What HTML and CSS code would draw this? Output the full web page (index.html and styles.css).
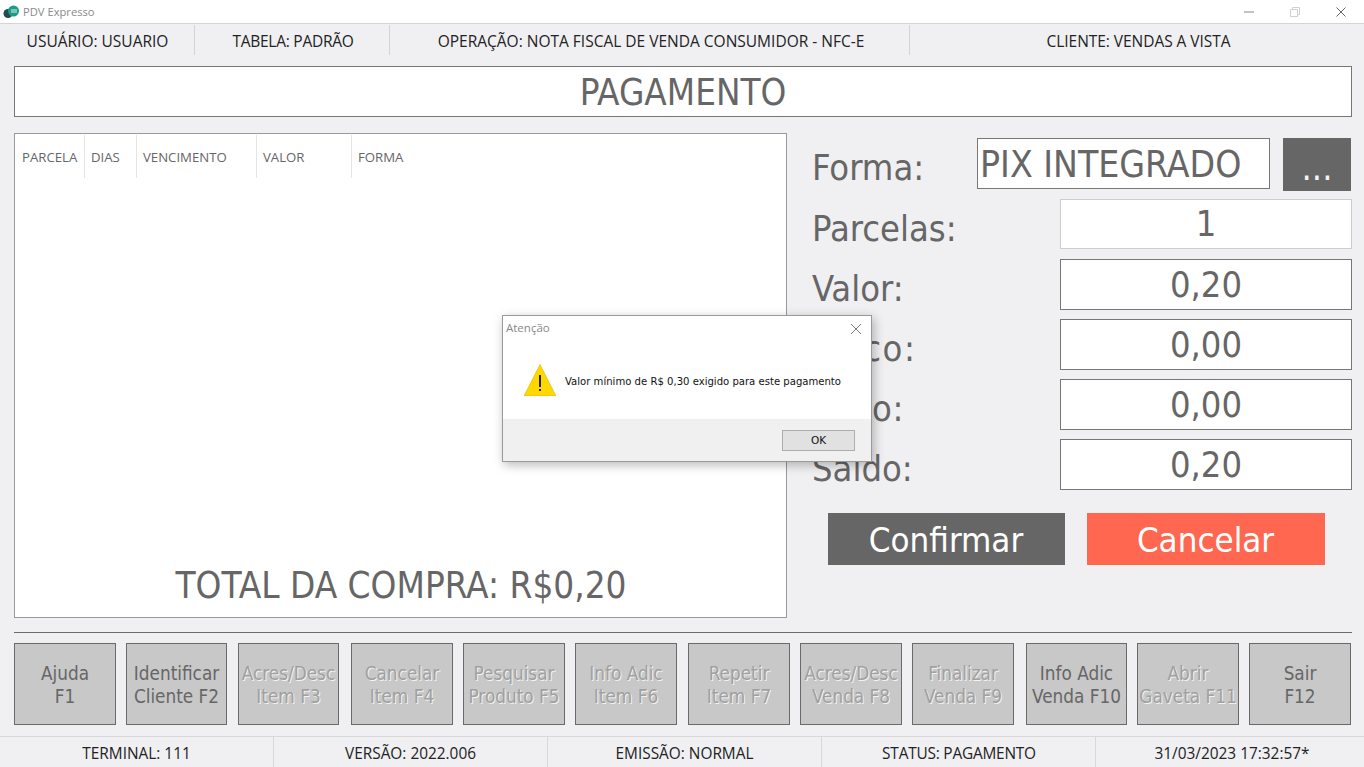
FILE: index.html
```html
<!DOCTYPE html>
<html lang="pt-BR">
<head>
<meta charset="utf-8">
<title>PDV Expresso</title>
<link rel="stylesheet" href="styles.css">
</head>
<body>
<div class="app">
  <header class="titlebar">
    <svg class="app-icon" viewBox="0 0 16 14" width="16" height="14">
      <circle cx="5" cy="8.5" r="4.5" fill="#1f4b52"/>
      <circle cx="10.5" cy="6" r="5.5" fill="#1e9a86"/>
      <rect x="8" y="4.5" width="6" height="1" fill="#d5f0ea"/>
      <rect x="8" y="6.5" width="6" height="1" fill="#d5f0ea"/>
    </svg>
    <span class="app-name">PDV Expresso</span>
    <div class="win-controls">
      <svg viewBox="0 0 12 12" width="12" height="12"><path d="M1 6h10" stroke="#888" fill="none"/></svg>
      <svg viewBox="0 0 12 12" width="12" height="12"><path d="M1.5 3.5h7v7h-7zM3.5 3.5v-2h7v7h-2" stroke="#d0d0d0" fill="none"/></svg>
      <svg viewBox="0 0 12 12" width="12" height="12"><path d="M1.5 1.5l9 9M10.5 1.5l-9 9" stroke="#666" fill="none"/></svg>
    </div>
  </header>

  <section class="infobar">
    <div class="info info-user">USUÁRIO: USUARIO</div>
    <div class="info info-table">TABELA: PADRÃO</div>
    <div class="info info-op">OPERAÇÃO: NOTA FISCAL DE VENDA CONSUMIDOR - NFC-E</div>
    <div class="info info-client">CLIENTE: VENDAS A VISTA</div>
  </section>

  <main class="content">
    <h1 class="page-title">PAGAMENTO</h1>
    <div class="columns">
      <section class="grid-panel">
        <div class="grid-head">
          <div class="col col-parcela">PARCELA</div>
          <div class="col col-dias">DIAS</div>
          <div class="col col-venc">VENCIMENTO</div>
          <div class="col col-valor">VALOR</div>
          <div class="col col-forma">FORMA</div>
        </div>
        <div class="total">TOTAL DA COMPRA: R$0,20</div>
      </section>
      <section class="form">
        <div class="row row-forma">
          <span class="label">Forma:</span>
          <div class="field field-forma">PIX INTEGRADO</div>
          <div class="more">...</div>
        </div>
        <div class="row">
          <span class="label">Parcelas:</span>
          <div class="field field-num field-soft">1</div>
        </div>
        <div class="row">
          <span class="label">Valor:</span>
          <div class="field field-num">0,20</div>
        </div>
        <div class="row">
          <span class="label label-troco">Troco:</span>
          <div class="field field-num">0,00</div>
        </div>
        <div class="row">
          <span class="label label-pago">Pago:</span>
          <div class="field field-num">0,00</div>
        </div>
        <div class="row">
          <span class="label">Saldo:</span>
          <div class="field field-num">0,20</div>
        </div>
        <div class="actions">
          <div class="action action-ok">Confirmar</div>
          <div class="action action-cancel">Cancelar</div>
        </div>
      </section>
    </div>
    <hr class="rule">
    <nav class="fkeys">
      <div class="fkey">Ajuda<br>F1</div>
      <div class="fkey narrow">Identificar<br>Cliente F2</div>
      <div class="fkey narrow off">Acres/Desc<br>Item F3</div>
      <div class="fkey off">Cancelar<br>Item F4</div>
      <div class="fkey off">Pesquisar<br>Produto F5</div>
      <div class="fkey off">Info Adic<br>Item F6</div>
      <div class="fkey off">Repetir<br>Item F7</div>
      <div class="fkey off">Acres/Desc<br>Venda F8</div>
      <div class="fkey off">Finalizar<br>Venda F9</div>
      <div class="fkey narrow">Info Adic<br>Venda F10</div>
      <div class="fkey off">Abrir<br>Gaveta F11</div>
      <div class="fkey">Sair<br>F12</div>
    </nav>
  </main>

  <footer class="status">
    <div class="stat">TERMINAL: 111</div>
    <div class="stat">VERSÃO: 2022.006</div>
    <div class="stat">EMISSÃO: NORMAL</div>
    <div class="stat stat-state">STATUS: PAGAMENTO</div>
    <div class="stat stat-clock">31/03/2023 17:32:57*</div>
  </footer>

  <div class="dialog">
    <div class="dialog-title">
      <span>Atenção</span>
      <svg viewBox="0 0 12 12" width="12" height="12"><path d="M1 1l10 10M11 1L1 11" stroke="#777" fill="none"/></svg>
    </div>
    <div class="dialog-body">
      <svg class="warn" viewBox="0 0 32 32" width="32" height="32">
        <path d="M16 0.5L32 32H0z" fill="#ffd800" stroke="#e2b100" stroke-width="0.6"/>
        <rect x="15" y="11" width="2" height="12" fill="#222"/>
        <rect x="15" y="25" width="2" height="2" fill="#222"/>
      </svg>
      <span class="dialog-msg">Valor mínimo de R$ 0,30 exigido para este pagamento</span>
    </div>
    <div class="dialog-foot">
      <div class="dialog-ok">OK</div>
    </div>
  </div>
</div>
</body>
</html>
```

FILE: styles.css
```css
* { box-sizing: border-box; }
html, body { margin: 0; padding: 0; }
body {
  width: 1364px;
  height: 767px;
  overflow: hidden;
  background: #f0f0f2;
  font-family: "DejaVu Sans Condensed", "DejaVu Sans", sans-serif;
  font-stretch: condensed;
  color: #666;
}
.app { position: relative; width: 1364px; height: 767px; display: flex; flex-direction: column; }

.titlebar {
  height: 24px;
  background: #fff;
  border-bottom: 1px solid #d4d4d4;
  display: flex;
  align-items: center;
  padding-left: 3px;
  flex: none;
}
.app-icon { margin-right: 4px; }
.app-name { font: 11.2px "Open Sans", sans-serif; color: #8a8a8a; }
.win-controls { margin-left: auto; display: flex; gap: 34px; padding-right: 17px; }

.infobar {
  height: 31px;
  flex: none;
  display: flex;
  padding-top: 1px;
  font: 15.5px "Open Sans", sans-serif;
  color: #222;
}
.info { display: flex; align-items: center; justify-content: center; border-right: 1px solid #d4d4d4; padding-top: 2px; }
.info-user { width: 195px; padding-left: 1px; }
.info-table { width: 195px; padding-left: 2px; letter-spacing: -0.25px; }
.info-op { width: 520px; padding-left: 3px; }
.info-client { flex: 1; border-right: 0; padding-left: 3px; letter-spacing: -0.05px; }

.content { flex: 1; display: flex; flex-direction: column; padding: 11px 12px 0 14px; }
.page-title {
  height: 51px;
  margin: 0;
  flex: none;
  background: #fff;
  border: 1px solid #777;
  font-size: 36.5px;
  font-weight: 400;
  line-height: 51px;
  text-align: center;
}
.columns { display: flex; margin-top: 16px; height: 485px; flex: none; }

.grid-panel {
  width: 773px;
  flex: none;
  background: #fff;
  border: 1px solid #999;
  display: flex;
  flex-direction: column;
  padding: 1px;
}
.grid-head { display: flex; height: 43px; font: 13.2px "Open Sans", sans-serif; color: #666; }
.col { display: flex; align-items: center; border-right: 1px solid #e4e4e4; padding-left: 6px; }
.col-parcela { width: 69px; padding-left: 6px; }
.col-dias { width: 52px; }
.col-venc { width: 120px; }
.col-valor { width: 95px; }
.col-forma { border-right: 0; }
.total { margin-top: auto; font-size: 36.6px; line-height: 52px; text-align: center; padding-left: 1px; padding-bottom: 4px; }

.form { flex: 1; display: flex; flex-direction: column; padding: 5px 0 0 25px; gap: 9px; }
.row { display: flex; align-items: flex-start; height: 51px; flex: none; }
.row-forma { height: 52px; }
.label { font-size: 36px; line-height: 51px; padding-top: 4px; }
.label-troco { letter-spacing: 1.5px; }
.label-pago { letter-spacing: 0.6px; }
.field {
  background: #fff;
  border: 1px solid #777;
  height: 51px;
  font-size: 36px;
  line-height: 49px;
  white-space: nowrap;
}
.field-forma { margin-left: auto; width: 293px; padding-left: 2px; font-size: 37px; line-height: 51px; }
.field-num { margin-left: auto; width: 292px; text-align: center; }
.field-soft { border-color: #ccc; height: 50px; line-height: 48px; }
.more {
  width: 68px;
  height: 53px;
  margin-left: 13px;
  margin-right: 1px;
  background: #666;
  color: #f4f4f4;
  font-size: 36px;
  line-height: 60px;
  text-align: center;
}
.actions { display: flex; gap: 22px; margin: 14px 0 0 16px; }
.action { width: 238px; height: 52px; color: #fff; font-size: 34.6px; line-height: 54px; text-align: center; }
.action-ok { background: #666; width: 237px; padding-right: 1px; }
.action-cancel { background: #ff6750; padding-right: 1px; }

.rule { margin: 14px 0 0; border: 0; border-top: 1px solid #6a6a6a; flex: none; height: 2px; width: 1338px; }
.fkeys {
  display: grid;
  grid-template-columns: 112px 112px 113px 112px 112px 113px 112px 112px 114px 111px 112px 102px;
  margin-top: 9px;
}
.fkey {
  width: 102px;
  height: 82px;
  background: #c8c8c8;
  border: 1px solid #6a6a6a;
  font-size: 18.8px;
  line-height: 23px;
  text-align: center;
  padding-top: 18px;
  color: #666;
  white-space: nowrap;
}
.fkey.narrow { width: 101px; }
.fkey.off { color: #a0a0a0; text-shadow: 1px 1px 0 #f2f2f2; }

.status {
  height: 31px;
  flex: none;
  border-top: 1px solid #d8d8d8;
  display: flex;
  font: 15.4px "Open Sans", sans-serif;
  color: #222;
}
.stat { width: 274px; display: flex; align-items: center; justify-content: center; border-right: 1px solid #d8d8d8; padding-top: 2px; }
.stat-state { letter-spacing: -0.2px; padding-left: 1px; }
.stat-clock { border-right: 0; flex: 1; padding-left: 4px; }

.dialog {
  position: absolute;
  left: 502px;
  top: 315px;
  width: 370px;
  height: 147px;
  background: #fff;
  border: 1px solid #999;
  box-shadow: 2px 3px 10px rgba(0,0,0,.28);
  display: flex;
  flex-direction: column;
}
.dialog-title {
  height: 30px;
  flex: none;
  display: flex;
  align-items: center;
  justify-content: space-between;
  padding: 0 9px 8px 3px;
  font: 11.5px "Open Sans", sans-serif;
  color: #888;
}
.dialog-title svg { margin-top: 4px; }
.dialog-body { flex: 1; display: flex; align-items: center; padding: 0 0 5px 21px; }
.warn { flex: none; }
.dialog-msg { margin-left: 9px; margin-top: 2px; font: 10.08px "DejaVu Sans", sans-serif; color: #111; white-space: nowrap; }
.dialog-foot {
  height: 42px;
  flex: none;
  background: #f0f0f0;
  display: flex;
  justify-content: flex-end;
  align-items: flex-start;
  padding: 11px 16px 0 0;
}
.dialog-ok {
  width: 73px;
  height: 21px;
  background: #e1e1e1;
  border: 1px solid #adadad;
  font: 10.5px/19px "DejaVu Sans", sans-serif;
  color: #111;
  text-align: center;
}
```
